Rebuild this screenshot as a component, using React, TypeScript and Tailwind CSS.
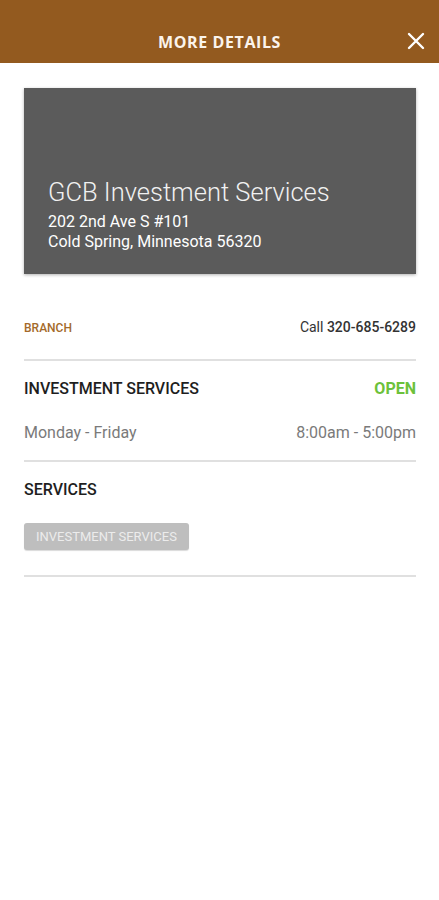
import React from "react"

export default function App() {
  return (
    <div className="min-h-[900px] w-[439px] bg-white font-['Roboto',sans-serif]">
      <header className="relative flex h-[63px] items-center justify-center bg-[#935a1f] pt-[20px]">
        <h1 className="font-['Open_Sans',sans-serif] text-[16px] font-bold tracking-[0.6px] text-[#fbf4ec]">
          MORE DETAILS
        </h1>
        <button className="absolute right-[13px] top-[31px] flex h-5 w-5 items-center justify-center">
          <svg width="18" height="18" viewBox="0 0 18 18">
            <path d="M2 2 L16 16 M16 2 L2 16" stroke="#ffffff" strokeWidth="2.4" strokeLinecap="round" />
          </svg>
        </button>
      </header>

      <div className="pl-6 pr-[23px]">
        <div className="mt-[25px] flex h-[186px] flex-col justify-end bg-[#5b5b5b] px-6 pb-[22px] shadow-[0_1px_3px_rgba(0,0,0,0.3)]">
          <div className="text-[25.5px] font-light leading-[30px] text-[#f1f1f1]">GCB Investment Services</div>
          <div className="mt-[5px] text-[16px] leading-[20px] text-white">202 2nd Ave S #101</div>
          <div className="text-[16px] leading-[20px] text-white">Cold Spring, Minnesota 56320</div>
        </div>

        <div className="flex h-[87px] items-center justify-between border-b-2 border-[#e0e0e0] pt-[22px]">
          <span className="text-[12px] font-medium text-[#a46a2a]">BRANCH</span>
          <span className="text-[14px] text-[#333]">
            Call <span className="font-medium">320-685-6289</span>
          </span>
        </div>

        <div className="border-b-2 border-[#e0e0e0] pb-[15px] pt-[16px]">
          <div className="flex items-center justify-between">
            <span className="text-[16px] font-medium text-[#1e1e1e]">INVESTMENT SERVICES</span>
            <span className="text-[16px] font-bold text-[#6cc13b]">OPEN</span>
          </div>
          <div className="mt-[20px] flex items-center justify-between text-[16px] text-[#7a7a7a]">
            <span>Monday - Friday</span>
            <span>8:00am - 5:00pm</span>
          </div>
        </div>

        <div className="border-b-2 border-[#e0e0e0] pb-[25px] pt-[16px]">
          <div className="text-[16px] font-medium text-[#1e1e1e]">SERVICES</div>
          <div className="mt-[21px] inline-flex h-[27px] items-center rounded-[3px] bg-[#bebebe] px-3 text-[13px] text-[#ececec] shadow-[0_1px_1px_rgba(0,0,0,0.15)]">
            INVESTMENT SERVICES
          </div>
        </div>
      </div>
    </div>
  )
}
